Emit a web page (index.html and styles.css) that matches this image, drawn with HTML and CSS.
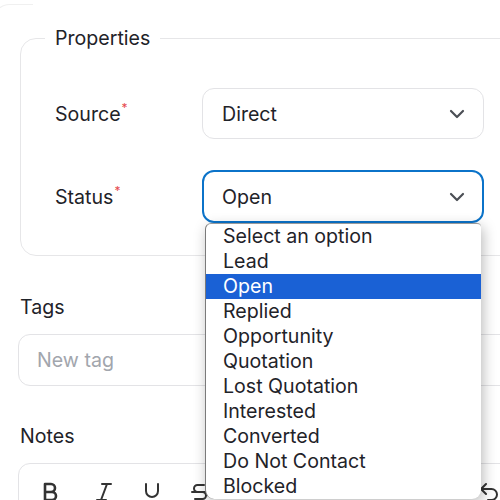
FILE: index.html
```html
<!DOCTYPE html>
<html>
<head>
<meta charset="utf-8">
<link rel="stylesheet" href="styles.css">
</head>
<body>
<div class="card">
  <fieldset class="props">
    <legend class="legend">Properties</legend>
    <div class="row row-first">
      <div class="label">Source<span class="req">*</span></div>
      <div class="select">
        <span class="value">Direct</span>
        <svg class="chev" width="16" height="10" viewBox="0 0 16 10"><path d="M2 2l6 6 6-6" fill="none" stroke="#4b4f55" stroke-width="2.2" stroke-linecap="round" stroke-linejoin="round"/></svg>
      </div>
    </div>
    <div class="row">
      <div class="label">Status<span class="req">*</span></div>
      <div class="select-wrap">
        <div class="select focused">
          <span class="value">Open</span>
          <svg class="chev" width="16" height="10" viewBox="0 0 16 10"><path d="M2 2l6 6 6-6" fill="none" stroke="#4b4f55" stroke-width="2.2" stroke-linecap="round" stroke-linejoin="round"/></svg>
        </div>
        <ul class="dropdown">
          <li>Select an option</li>
          <li>Lead</li>
          <li class="active">Open</li>
          <li>Replied</li>
          <li>Opportunity</li>
          <li>Quotation</li>
          <li>Lost Quotation</li>
          <li>Interested</li>
          <li>Converted</li>
          <li>Do Not Contact</li>
          <li>Blocked</li>
        </ul>
      </div>
    </div>
  </fieldset>

  <div class="field-label tags-label">Tags</div>
  <div class="input"><span class="placeholder">New tag</span></div>

  <div class="field-label notes-label">Notes</div>
  <div class="editor">
    <div class="toolbar">
      <svg class="tool" width="24" height="24" viewBox="0 0 24 24"><path d="M7 4h6a4 4 0 0 1 0 8H7z M7 12h7a4 4 0 0 1 0 8H7z" fill="none" stroke="#333" stroke-width="2.6" stroke-linejoin="round"/></svg>
      <svg class="tool italic" width="24" height="24" viewBox="0 0 24 24"><path d="M19 4h-9M14 20H5M15 4L9 20" fill="none" stroke="#333" stroke-width="2" stroke-linecap="round"/></svg>
      <svg class="tool" width="24" height="24" viewBox="0 0 24 24"><path d="M6 4v7a6 6 0 0 0 12 0V4M4 21h16" fill="none" stroke="#333" stroke-width="2" stroke-linecap="round"/></svg>
      <svg class="tool" width="24" height="24" viewBox="0 0 24 24"><path d="M16 5H9.5a3.5 3.5 0 0 0 0 7h5a3.5 3.5 0 0 1 0 7H7M4 12h16" fill="none" stroke="#333" stroke-width="2" stroke-linecap="round"/></svg>
      <span class="spacer"></span>
      <svg class="tool undo" width="24" height="24" viewBox="0 0 24 24"><path d="M9 14L4 9l5-5M4 9h10.5a5.5 5.5 0 0 1 0 11H11" fill="none" stroke="#333" stroke-width="2" stroke-linecap="round" stroke-linejoin="round"/></svg>
    </div>
  </div>
</div>
</body>
</html>
```

FILE: styles.css
```css
html, body {
  margin: 0;
  padding: 0;
  background: #ffffff;
  overflow: hidden;
  width: 500px;
  height: 500px;
}

body {
  font-family: "Inter", "Liberation Sans", sans-serif;
  color: #1f2329;
  position: relative;
}

.card {
  margin: 4px 0 0 0;
  width: 560px;
  height: 496px;
  overflow: hidden;
  padding: 0 0 0 20px;
  box-sizing: border-box;
  position: relative;
}

.card::before {
  content: "";
  position: absolute;
  left: -8px;
  top: 0;
  width: 40px;
  height: 40px;
  border-top: 1px solid #f0f0f0;
  border-left: 1px solid #f0f0f0;
  border-top-left-radius: 18px;
}

.props {
  margin: 23px 0 0 0;
  width: 540px;
  box-sizing: border-box;
  border: 1px solid #e6e6e8;
  border-radius: 16px;
  padding: 0 0 32px 34px;
  position: relative;
  z-index: 2;
}

.legend {
  font-size: 19.6px;
  line-height: 23px;
  padding: 0 10px;
  margin-left: -10px;
  color: #1f2329;
}

.row {
  display: flex;
  align-items: center;
  margin-top: 32px;
}

.row-first {
  margin-top: 38px;
}

.label {
  width: 147px;
  font-size: 19.6px;
  line-height: 23px;
  padding-top: 3px;
  position: relative;
}

.req {
  color: #e5484d;
  font-size: 12px;
  position: relative;
  top: -9px;
  margin-left: 1px;
}

.select-wrap {
  position: relative;
}

.select {
  width: 282px;
  height: 51px;
  box-sizing: border-box;
  border: 1px solid #e3e3e6;
  border-radius: 12px;
  display: flex;
  align-items: center;
  justify-content: space-between;
  padding: 0 18px 0 19px;
  background: #fff;
  font-size: 19.6px;
}

.select.focused {
  border: 2px solid #0b73c9;
  padding-left: 18px;
  padding-right: 17px;
  height: 53px;
  margin-top: -1px;
}

.value {
  color: #1f2329;
}

.chev {
  display: block;
}

.dropdown {
  position: absolute;
  top: 52px;
  left: 3px;
  width: 276px;
  box-sizing: border-box;
  margin: 0;
  padding: 0;
  list-style: none;
  background: #fff;
  border-left: 1px solid #7a7a7a;
  border-top: 1px solid #9a9a9a;
  border-radius: 6px 4px 9px 9px;
  box-shadow: 2px 4px 14px rgba(0, 0, 0, 0.28);
  z-index: 10;
  font-size: 19.6px;
  line-height: 25px;
}

.dropdown li {
  padding-left: 17px;
  color: #1f2329;
  height: 25px;
  white-space: nowrap;
}

.dropdown li.active {
  background: #1a61d5;
  color: #ffffff;
}

.field-label {
  font-size: 19.6px;
  line-height: 23px;
  color: #1f2329;
}

.tags-label {
  margin: 40px 0 0 0;
}

.input {
  margin: 15px 0 0 -2px;
  height: 52px;
  width: 560px;
  box-sizing: border-box;
  border: 1px solid #e3e3e6;
  border-radius: 12px;
  display: flex;
  align-items: center;
  padding-left: 18px;
  font-size: 19.6px;
}

.placeholder {
  color: #a2a6ad;
}

.notes-label {
  margin: 39px 0 0 0;
}

.editor {
  margin: 15px 0 0 -2px;
  width: 560px;
  height: 120px;
  box-sizing: border-box;
  border: 1px solid #e3e3e6;
  border-radius: 12px;
}

.toolbar {
  display: flex;
  align-items: center;
  gap: 24px;
  padding: 16px 0 0 19px;
  width: 482px;
  box-sizing: border-box;
}

.italic {
  margin-left: 6px;
}

.spacer {
  flex: 1;
}

.tool {
  display: block;
}
```
